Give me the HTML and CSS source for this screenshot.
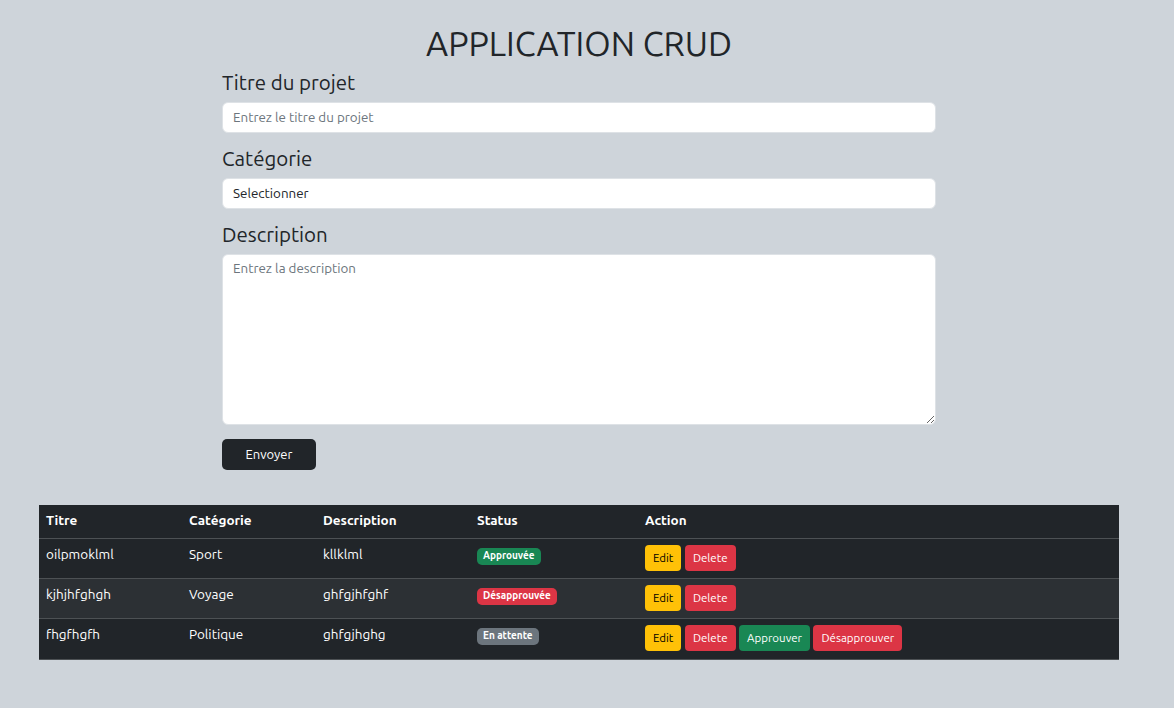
FILE: index.html
```html
<!DOCTYPE html>
<html lang="fr">
<head>
<meta charset="utf-8">
<title>Application CRUD</title>
<link rel="stylesheet" href="styles.css">
</head>
<body>
<div class="page">
  <h1 class="title">APPLICATION CRUD</h1>
  <form class="form">
    <label class="label" for="titre">Titre du projet</label>
    <input class="control" id="titre" type="text" placeholder="Entrez le titre du projet">
    <label class="label" for="cat">Catégorie</label>
    <div class="control select" id="cat">Selectionner</div>
    <label class="label" for="desc">Description</label>
    <textarea class="control area" id="desc" placeholder="Entrez la description"></textarea>
    <button class="submit" type="button">Envoyer</button>
  </form>

  <div class="table-wrap">
    <table class="table">
      <colgroup>
        <col class="c1"><col class="c2"><col class="c3"><col class="c4"><col>
      </colgroup>
      <thead>
        <tr><th>Titre</th><th>Catégorie</th><th>Description</th><th>Status</th><th>Action</th></tr>
      </thead>
      <tbody>
        <tr>
          <td>oilpmoklml</td><td>Sport</td><td>kllklml</td>
          <td><span class="badge ok">Approuvée</span></td>
          <td><div class="actions"><span class="btn warn">Edit</span><span class="btn danger">Delete</span></div></td>
        </tr>
        <tr class="alt">
          <td>kjhjhfghgh</td><td>Voyage</td><td>ghfgjhfghf</td>
          <td><span class="badge ko">Désapprouvée</span></td>
          <td><div class="actions"><span class="btn warn">Edit</span><span class="btn danger">Delete</span></div></td>
        </tr>
        <tr>
          <td>fhgfhgfh</td><td>Politique</td><td>ghfgjhghg</td>
          <td><span class="badge wait">En attente</span></td>
          <td><div class="actions"><span class="btn warn">Edit</span><span class="btn danger">Delete</span><span class="btn success">Approuver</span><span class="btn danger">Désapprouver</span></div></td>
        </tr>
      </tbody>
    </table>
  </div>
</div>
</body>
</html>
```

FILE: styles.css
```css
* { box-sizing: border-box; }
html, body { margin: 0; padding: 0; }
body {
  background: #ced4da;
  color: #212529;
  font-family: Ubuntu, "Noto Sans", "Open Sans", sans-serif;
  font-size: 14px;
  height: 708px;
  overflow: hidden;
}
.page { width: 1158px; padding-top: 23px; }
.title {
  margin: 0 0 8px;
  text-align: center;
  font-weight: 400;
  font-size: 34px;
  line-height: 40px;
}
.form { width: 714px; margin: 0 0 0 222px; display: flex; flex-direction: column; align-items: flex-start; }
.label { font-size: 20.5px; line-height: 24px; margin-bottom: 7px; }
.control {
  width: 100%;
  height: 31px;
  border: 1px solid #dee2e6;
  border-radius: 6px;
  background: #fff;
  padding: 0 10px;
  font-family: inherit;
  font-size: 13.4px;
  color: #212529;
  margin-bottom: 14px;
}
.control::placeholder { color: #6c757d; }
.select { display: flex; align-items: center; }
.area { height: 171px; padding-top: 5px; resize: vertical; margin-bottom: 14px; line-height: 18px; }
.submit {
  width: 94px; height: 31px; padding: 0 0 2px;
  background: #212529; color: #fff; border: 0; border-radius: 5px;
  font-family: inherit; font-size: 13px;
}
.table-wrap { margin: 35px 39px 0; }
.table { width: 100%; border-collapse: collapse; background: #212529; color: #fff; }
.c1 { width: 143px; } .c2 { width: 134px; } .c3 { width: 154px; } .c4 { width: 168px; }
.table th {
  text-align: left; font-weight: 700; font-size: 13.5px;
  padding: 5px 7px 6px; line-height: 21px; border-bottom: 1px solid #4d5154; height: 33px;
}
.table td {
  vertical-align: top; padding: 6px 7px 6px; line-height: 18px; font-size: 13.5px;
  border-bottom: 1px solid #4d5154; height: 40px;
}
.table tbody tr:last-child td { height: 41px; }
.table tr.alt td { background: #2c3034; }
.badge {
  display: inline-block; margin-top: 2px;
  font-size: 10px; font-weight: 700; line-height: 12px;
  padding: 2px 6px 3px; border-radius: 5px; color: #fff;
}
.ok { background: #198754; } .ko { background: #dc3545; } .wait { background: #6c757d; }
.actions { display: flex; gap: 3.5px; }
.btn {
  display: inline-block; height: 26px; line-height: 26px; padding: 0 8px;
  font-size: 11.5px; border-radius: 4px; color: #fff;
}
.warn { background: #ffc107; color: #000; }
.danger { background: #dc3545; }
.success { background: #198754; }
```
